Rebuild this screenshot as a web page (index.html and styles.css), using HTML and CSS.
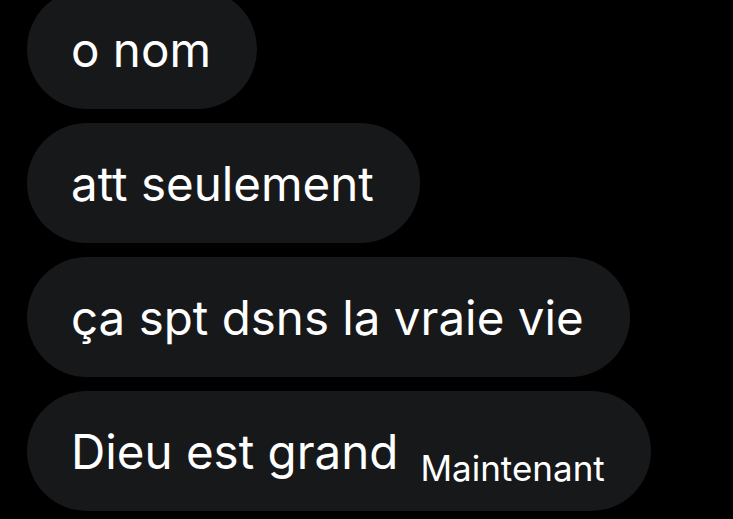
FILE: index.html
```html
<!DOCTYPE html>
<html lang="fr">
<head>
<meta charset="utf-8">
<link rel="stylesheet" href="styles.css">
</head>
<body>
<div class="thread">
  <div class="bubble">o nom</div>
  <div class="bubble">att seulement</div>
  <div class="bubble">ça spt dsns la vraie vie</div>
  <div class="bubble last"><span class="msg">Dieu est grand</span><span class="time">Maintenant</span></div>
</div>
</body>
</html>
```

FILE: styles.css
```css
html, body {
  margin: 0;
  padding: 0;
  background: #000;
  height: 100%;
  overflow: hidden;
}
.thread {
  display: flex;
  flex-direction: column;
  align-items: flex-start;
  gap: 14px;
  margin-top: -11px;
  padding-left: 27px;
  font-family: Inter, "Noto Sans", sans-serif;
  color: #fff;
}
.bubble {
  box-sizing: border-box;
  height: 120px;
  display: flex;
  align-items: center;
  padding: 0 46px 0 44px;
  background: #17181a;
  border-radius: 60px;
  font-size: 47.5px;
}
.bubble.last {
  align-items: baseline;
  padding-top: 32px;
}
.time {
  font-size: 35px;
  margin-left: 22px;
  position: relative;
  top: 12px;
}
```
